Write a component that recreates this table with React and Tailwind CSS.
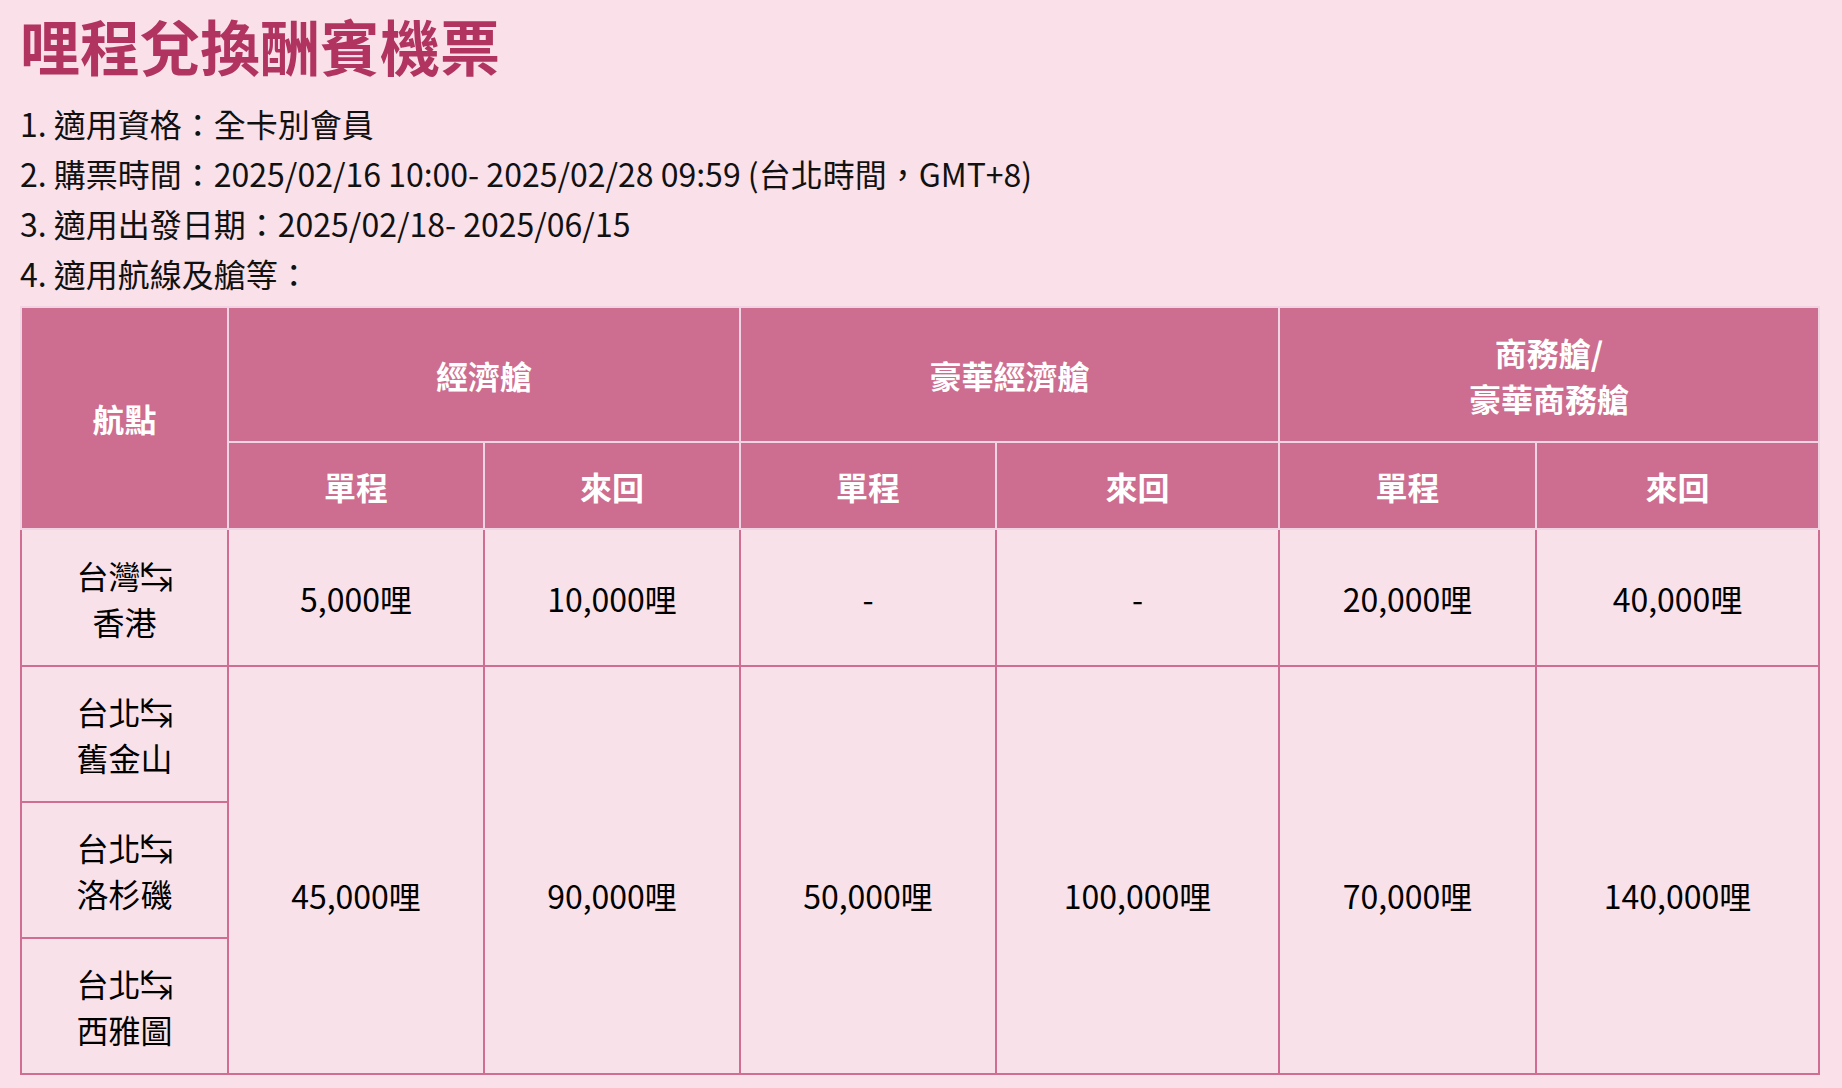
import React from "react";

const font = { fontFamily: '"Noto Sans CJK TC", "Noto Sans", sans-serif' };

function Route({ a, b }) {
  return (
    <>
      {a}
      <span>↹</span>
      <br />
      {b}
    </>
  );
}

export default function App() {
  const th = "border-2 border-[#f0d4e4] bg-[#cd6d8f] text-white font-bold text-[32px] leading-[46px] text-center align-middle";
  const td = "border-2 border-[#cf6e92] text-black text-[32px] leading-[46px] text-center align-middle";
  const tdSpan = td + " pt-[50px]";
  return (
    <div className="min-h-[1088px] w-[1842px] bg-[#f9e0e9] pl-5 pr-6 pt-[10px]" style={font}>
      <h1 className="text-[60px] leading-[70px] font-bold text-[#b1335f]">哩程兌換酬賓機票</h1>
      <div className="mt-[18px] text-[32px] leading-[50px] text-[#111]">
        <p>1. 適用資格：全卡別會員</p>
        <p>2. 購票時間：2025/02/16 10:00- 2025/02/28 09:59 (台北時間，GMT+8)</p>
        <p>3. 適用出發日期：2025/02/18- 2025/06/15</p>
        <p>4. 適用航線及艙等：</p>
      </div>
      <table className="mt-2 w-[1798px] table-fixed border-collapse bg-[#f9e1e9]">
        <colgroup>
          <col className="w-[207px]" />
          <col className="w-[256px]" />
          <col className="w-[256px]" />
          <col className="w-[256px]" />
          <col className="w-[283px]" />
          <col className="w-[257px]" />
          <col className="w-[283px]" />
        </colgroup>
        <thead>
          <tr className="h-[135px]">
            <th rowSpan={2} className={th}>航點</th>
            <th colSpan={2} className={th}>經濟艙</th>
            <th colSpan={2} className={th}>豪華經濟艙</th>
            <th colSpan={2} className={th}>商務艙/<br />豪華商務艙</th>
          </tr>
          <tr className="h-[87px]">
            <th className={th}>單程</th>
            <th className={th}>來回</th>
            <th className={th}>單程</th>
            <th className={th}>來回</th>
            <th className={th}>單程</th>
            <th className={th}>來回</th>
          </tr>
        </thead>
        <tbody>
          <tr className="h-[137px]">
            <td className={td}><Route a="台灣" b="香港" /></td>
            <td className={td}>5,000哩</td>
            <td className={td}>10,000哩</td>
            <td className={td}>-</td>
            <td className={td}>-</td>
            <td className={td}>20,000哩</td>
            <td className={td}>40,000哩</td>
          </tr>
          <tr className="h-[136px]">
            <td className={td}><Route a="台北" b="舊金山" /></td>
            <td rowSpan={3} className={tdSpan}>45,000哩</td>
            <td rowSpan={3} className={tdSpan}>90,000哩</td>
            <td rowSpan={3} className={tdSpan}>50,000哩</td>
            <td rowSpan={3} className={tdSpan}>100,000哩</td>
            <td rowSpan={3} className={tdSpan}>70,000哩</td>
            <td rowSpan={3} className={tdSpan}>140,000哩</td>
          </tr>
          <tr className="h-[136px]">
            <td className={td}><Route a="台北" b="洛杉磯" /></td>
          </tr>
          <tr className="h-[136px]">
            <td className={td}><Route a="台北" b="西雅圖" /></td>
          </tr>
        </tbody>
      </table>
    </div>
  );
}
